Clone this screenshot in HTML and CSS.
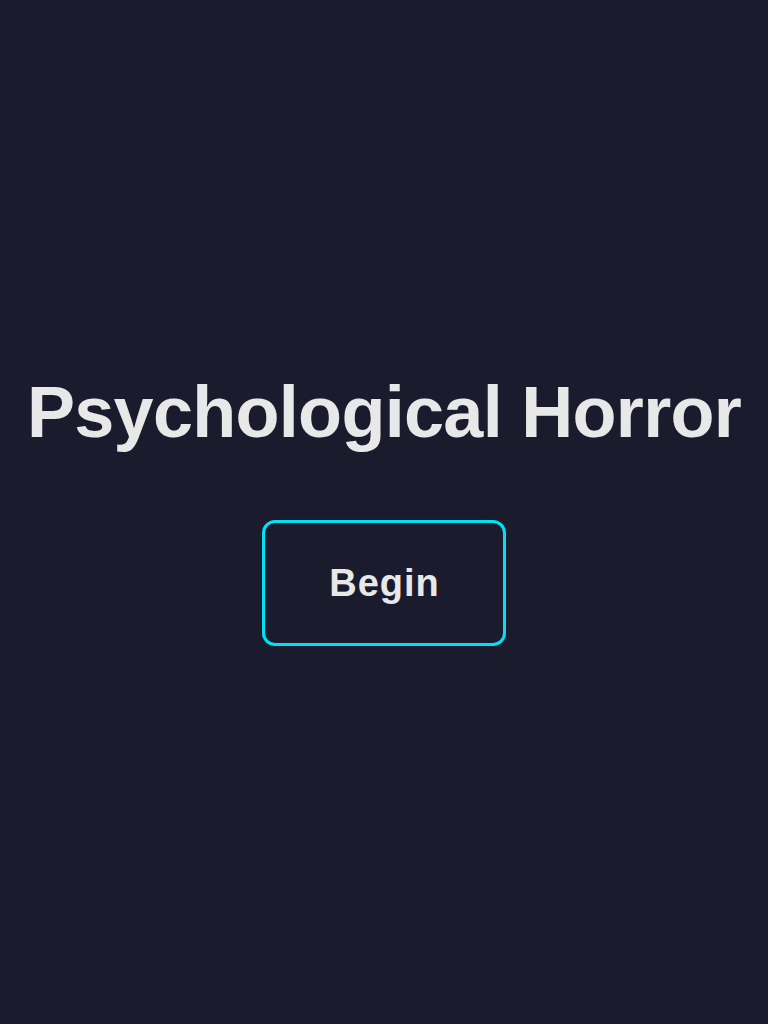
FILE: index.html
```html
<!DOCTYPE html>
<html lang="en">
<head>
<meta charset="utf-8">
<title>Psychological Horror</title>
<link rel="stylesheet" href="styles.css">
</head>
<body>
  <main class="intro">
    <h1 class="intro-title">Psychological Horror</h1>
    <button class="intro-start" type="button">Begin</button>
  </main>
</body>
</html>
```
FILE: styles.css
```css
html, body {
  margin: 0;
  padding: 0;
  background: #1b1b2e;
}

body {
  font-family: "Liberation Sans", Arial, sans-serif;
  color: #e8e8e8;
}

.intro {
  box-sizing: border-box;
  min-height: 100vh;
  padding-bottom: 6px;
  display: flex;
  flex-direction: column;
  align-items: center;
  justify-content: center;
  gap: 68px;
}

.intro-title {
  margin: 0;
  font-size: 72px;
  font-weight: 700;
  line-height: 80px;
  letter-spacing: -0.7px;
  color: #e8e8e8;
  white-space: nowrap;
}

.intro-start {
  box-sizing: border-box;
  width: 244px;
  height: 126px;
  padding: 0 0 0 1px;
  font-family: inherit;
  font-size: 38px;
  font-weight: 700;
  line-height: 42px;
  letter-spacing: 1px;
  color: #e8e8e8;
  background: transparent;
  border: 3px solid #00e1f5;
  border-radius: 13px;
  cursor: pointer;
}
```
